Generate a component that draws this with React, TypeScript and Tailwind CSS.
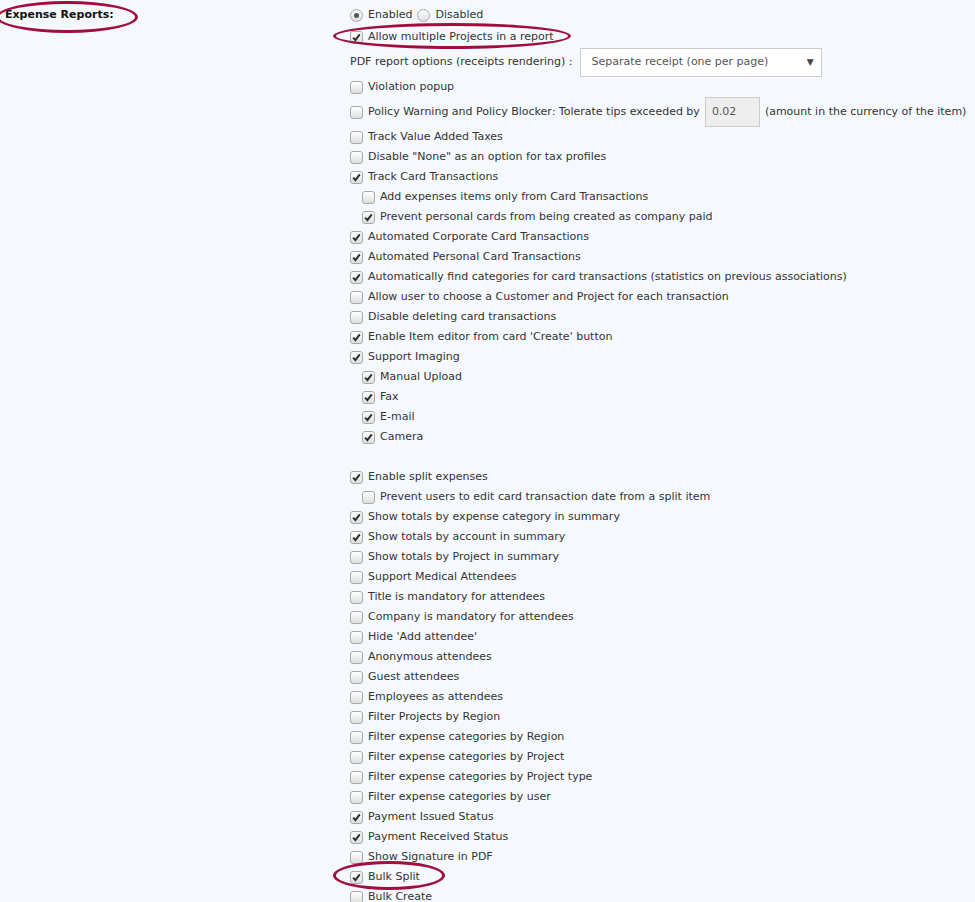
import React from "react"

type Item = { label: string; checked?: boolean; indent?: boolean; blank?: boolean }

const items: Item[] = [
  { label: "Track Value Added Taxes" },
  { label: 'Disable "None" as an option for tax profiles' },
  { label: "Track Card Transactions", checked: true },
  { label: "Add expenses items only from Card Transactions", indent: true },
  { label: "Prevent personal cards from being created as company paid", checked: true, indent: true },
  { label: "Automated Corporate Card Transactions", checked: true },
  { label: "Automated Personal Card Transactions", checked: true },
  { label: "Automatically find categories for card transactions (statistics on previous associations)", checked: true },
  { label: "Allow user to choose a Customer and Project for each transaction" },
  { label: "Disable deleting card transactions" },
  { label: "Enable Item editor from card 'Create' button", checked: true },
  { label: "Support Imaging", checked: true },
  { label: "Manual Upload", checked: true, indent: true },
  { label: "Fax", checked: true, indent: true },
  { label: "E-mail", checked: true, indent: true },
  { label: "Camera", checked: true, indent: true },
  { label: "", blank: true },
  { label: "Enable split expenses", checked: true },
  { label: "Prevent users to edit card transaction date from a split item", indent: true },
  { label: "Show totals by expense category in summary", checked: true },
  { label: "Show totals by account in summary", checked: true },
  { label: "Show totals by Project in summary" },
  { label: "Support Medical Attendees" },
  { label: "Title is mandatory for attendees" },
  { label: "Company is mandatory for attendees" },
  { label: "Hide 'Add attendee'" },
  { label: "Anonymous attendees" },
  { label: "Guest attendees" },
  { label: "Employees as attendees" },
  { label: "Filter Projects by Region" },
  { label: "Filter expense categories by Region" },
  { label: "Filter expense categories by Project" },
  { label: "Filter expense categories by Project type" },
  { label: "Filter expense categories by user" },
  { label: "Payment Issued Status", checked: true },
  { label: "Payment Received Status", checked: true },
  { label: "Show Signature in PDF" },
  { label: "Bulk Split", checked: true },
  { label: "Bulk Create" },
]

function Box({ checked }: { checked?: boolean }) {
  return (
    <span className="relative inline-block w-[13px] h-[13px] shrink-0 rounded-[3px] border border-[#a9a9a9] bg-gradient-to-b from-[#ffffff] to-[#dedede]">
      {checked && (
        <svg viewBox="0 0 13 13" className="absolute -left-px -top-px w-[13px] h-[13px]">
          <path d="M3.2 6.6 L5.4 9.2 L9.8 3.4" fill="none" stroke="#2f2f2f" strokeWidth="2" />
        </svg>
      )}
    </span>
  )
}

function Radio({ checked }: { checked?: boolean }) {
  return (
    <span className="relative inline-flex items-center justify-center w-[13px] h-[13px] shrink-0 rounded-full border border-[#a9a9a9] bg-gradient-to-b from-[#ffffff] to-[#dedede]">
      {checked && <span className="w-[5px] h-[5px] rounded-full bg-[#555]" />}
    </span>
  )
}

function Ellipse({ className }: { className: string }) {
  return <div className={`absolute rounded-[50%] border-[3px] border-[#a20d3e] pointer-events-none ${className}`} />
}

export default function App() {
  return (
    <div className="relative min-h-[902px] bg-[#f5f9fd] text-[#333] text-[11px] font-['DejaVu_Sans',Verdana,sans-serif] overflow-hidden">
      <div className="flex pt-[4px]">
        <div className="w-[350px] pl-[5px] h-[22px] flex items-center font-bold text-[#111]">Expense Reports:</div>
        <div className="flex-1">
          <div className="h-[22px] flex items-center gap-[5px]">
            <Radio checked />
            <span>Enabled</span>
            <Radio />
            <span>Disabled</span>
          </div>
          <div className="h-[22px] flex items-center gap-[5px]">
            <Box checked />
            <span>Allow multiple Projects in a report</span>
          </div>
          <div className="h-[29px] flex items-center">
            <span>PDF report options (receipts rendering) :</span>
            <div className="ml-[7px] w-[242px] h-[29px] bg-white border border-[#ccc] flex items-center justify-between pl-[11px] pr-[7px] text-[#555]">
              <span>Separate receipt (one per page)</span>
              <span className="text-[9px] text-[#444]">▼</span>
            </div>
          </div>
          <div className="h-[20px] flex items-center gap-[5px]">
            <Box />
            <span>Violation popup</span>
          </div>
          <div className="h-[30px] flex items-center gap-[5px]">
            <Box />
            <span>Policy Warning and Policy Blocker: Tolerate tips exceeded by</span>
            <div className="w-[55px] h-[30px] bg-[#eeeeee] border border-[#ccc] flex items-center pl-[6px] text-[#555]">0.02</div>
            <span>(amount in the currency of the item)</span>
          </div>
          {items.map((it, i) =>
            it.blank ? (
              <div key={i} className="h-[20px]" />
            ) : (
              <div key={i} className={`h-[20px] flex items-center gap-[5px] whitespace-nowrap ${it.indent ? "pl-[12px]" : ""}`}>
                <Box checked={it.checked} />
                <span>{it.label}</span>
              </div>
            )
          )}
        </div>
      </div>
      <Ellipse className="left-[-4px] top-[1px] w-[142px] h-[32px]" />
      <Ellipse className="left-[333px] top-[23px] w-[238px] h-[26px]" />
      <Ellipse className="left-[333px] top-[861px] w-[112px] h-[29px]" />
    </div>
  )
}
